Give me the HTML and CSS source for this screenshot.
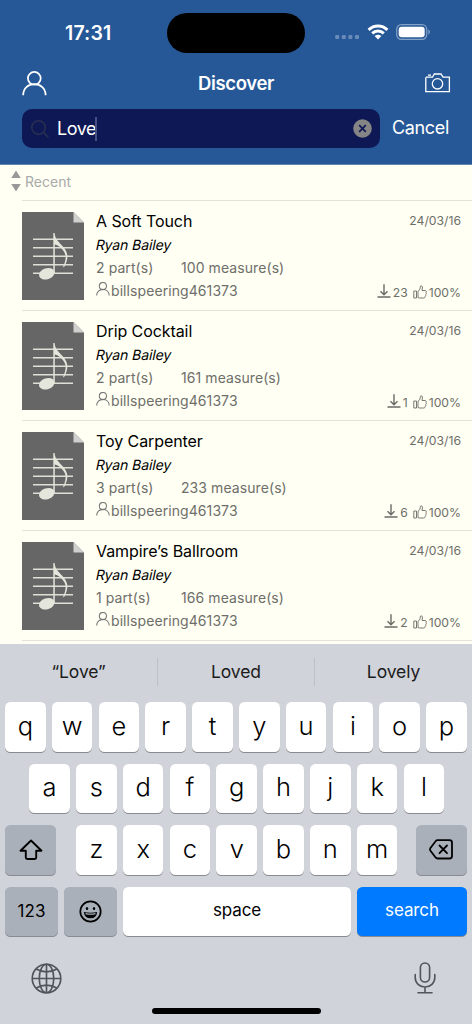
FILE: index.html
```html
<!DOCTYPE html>
<html lang="en">
<head>
<meta charset="utf-8">
<meta name="viewport" content="width=device-width, initial-scale=1">
<title>Discover</title>
<link rel="stylesheet" href="styles.css">
</head>
<body>
<svg class="sprite" aria-hidden="true">
  <symbol id="person" viewBox="0 0 25 25"><circle cx="12.3" cy="7.3" r="6.4"/><path d="M1.2 24.2C1.2 17.5 6 13.2 12.3 13.2S23.6 17.5 23.6 24.2"/></symbol>
  <symbol id="sheet" viewBox="0 0 62 88">
    <path fill="#666" d="M0 0H51.5L62 10.500V88H0z"/><path fill="#d0d0ce" d="M51.500 0L62 10.500H51.500z"/>
    <path fill="none" stroke="#dedfd5" stroke-width="1.500" d="M11 27.200H51M11 35.700H51M11 44.200H51M11 52.700H51M11 61.200H51"/>
    <ellipse cx="24.800" cy="61.700" rx="8" ry="5.500" transform="rotate(-18 24.8 61.700)" fill="#e4e5db"/>
    <path fill="#e4e5db" d="M31.300 21H32.600C33.200 27.500 36.500 29.500 40.500 34C45.500 39.500 47.500 45 42.500 54.500L40.800 55.500C44.500 47.500 44.500 43 41.500 39C39 35.500 36 33.300 32.800 32.500V61H31.300z"/>
  </symbol>
  <symbol id="download" viewBox="0 0 14 14"><path d="M7 .2V10.500M3.500 7.200L7 10.700 10.500 7.200M.5 13H13.500"/></symbol>
  <symbol id="thumb" viewBox="0 0 14 14"><path d="M.8 6H3.500V13H.8zM5 6.300C7 5 7.200 3.500 7.400 1.200C8.900.3 9.600 1.500 9.400 3L9 5.500H12C13.500 5.600 13.600 7 13 7.700C13.500 8.500 13.200 9.300 12.700 9.700C13 10.500 12.600 11 12.200 11.400C12.300 12.400 11.500 13 10.700 13H6.500L5 12.500z"/></symbol>
</svg>
<main class="screen">
  <header class="header">
    <div class="status">
      <span class="time">17:31</span>
      <span class="island"></span>
      <span class="signals">
        <svg class="cell" viewBox="0 0 25 5"><rect x=".2" width="4" height="4" rx="1"/><rect x="6.800" width="4" height="4" rx="1"/><rect x="13.400" width="4" height="4" rx="1"/><rect x="20" width="4" height="4" rx="1"/></svg>
        <svg class="wifi" viewBox="0 0 22 16"><path d="M1.600 5.900C7 .8 15 .8 20.400 5.900M5.200 9.400C8.500 6.300 13.500 6.300 16.800 9.400"/><path class="wifi-tip" d="M7.600 12.100Q11 9.400 14.400 12.100L11 15.600z"/></svg>
        <svg class="battery" viewBox="0 0 35 16"><rect class="shell" x=".7" y=".7" width="30" height="14.600" rx="4.600"/><rect x="2.700" y="2.700" width="26" height="10.600" rx="3"/><path class="cap" d="M32.400 5.300Q35.600 8 32.400 10.700z"/></svg>
      </span>
    </div>
    <div class="nav">
      <svg class="profile"><use href="#person"/></svg>
      <h1 class="title">Discover</h1>
      <svg class="camera" viewBox="0 0 25 20"><path d="M1 4.200H7.500L9.300 1H16L18 4.200H24.400V18.700H.8V4.200M3 2.200H6"/><circle cx="12.500" cy="10.800" r="5.200"/></svg>
    </div>
    <div class="search-row">
      <div class="search-box">
        <svg class="lens" viewBox="0 0 18 18"><circle cx="7.500" cy="7.500" r="6.700"/><path d="M12.300 12.300L17.300 17.300"/></svg>
        <span class="query">Love</span><span class="caret"></span>
        <svg class="clear" viewBox="0 0 19 19"><circle cx="9.500" cy="9.500" r="9.300"/><path d="M6.200 6.200L12.800 12.800M12.800 6.200L6.200 12.800"/></svg>
      </div>
      <span class="cancel">Cancel</span>
    </div>
  </header>

  <section class="results">
    <div class="sort"><svg class="sorter" viewBox="0 0 10 22"><path d="M5 .5L9.800 8H.2zM5 21.500L9.800 14H.2z"/></svg><span>Recent</span></div>
    <article class="song">
      <svg class="thumb-sheet"><use href="#sheet"/></svg>
      <div class="details"><h2>A Soft Touch</h2><p class="artist">Ryan Bailey</p><p class="meta"><span class="parts">2 part(s)</span><span>100 measure(s)</span></p><p class="user"><svg><use href="#person"/></svg>billspeering461373</p></div>
      <div class="side"><time>24/03/16</time><p class="stats"><svg class="dl"><use href="#download"/></svg><span>23</span><svg class="like"><use href="#thumb"/></svg><span>100%</span></p></div>
    </article>
    <article class="song">
      <svg class="thumb-sheet"><use href="#sheet"/></svg>
      <div class="details"><h2>Drip Cocktail</h2><p class="artist">Ryan Bailey</p><p class="meta"><span class="parts">2 part(s)</span><span>161 measure(s)</span></p><p class="user"><svg><use href="#person"/></svg>billspeering461373</p></div>
      <div class="side"><time>24/03/16</time><p class="stats"><svg class="dl"><use href="#download"/></svg><span>1</span><svg class="like"><use href="#thumb"/></svg><span>100%</span></p></div>
    </article>
    <article class="song">
      <svg class="thumb-sheet"><use href="#sheet"/></svg>
      <div class="details"><h2>Toy Carpenter</h2><p class="artist">Ryan Bailey</p><p class="meta"><span class="parts">3 part(s)</span><span>233 measure(s)</span></p><p class="user"><svg><use href="#person"/></svg>billspeering461373</p></div>
      <div class="side"><time>24/03/16</time><p class="stats"><svg class="dl"><use href="#download"/></svg><span>6</span><svg class="like"><use href="#thumb"/></svg><span>100%</span></p></div>
    </article>
    <article class="song">
      <svg class="thumb-sheet"><use href="#sheet"/></svg>
      <div class="details"><h2>Vampire’s Ballroom</h2><p class="artist">Ryan Bailey</p><p class="meta"><span class="parts">1 part(s)</span><span>166 measure(s)</span></p><p class="user"><svg><use href="#person"/></svg>billspeering461373</p></div>
      <div class="side"><time>24/03/16</time><p class="stats"><svg class="dl"><use href="#download"/></svg><span>2</span><svg class="like"><use href="#thumb"/></svg><span>100%</span></p></div>
    </article>
  </section>

  <section class="keyboard">
    <div class="suggestions"><span>“Love”</span><span>Loved</span><span>Lovely</span></div>
    <div class="keys">
      <div class="row"><b>q</b><b>w</b><b>e</b><b>r</b><b>t</b><b>y</b><b>u</b><b>i</b><b>o</b><b>p</b></div>
      <div class="row home"><b>a</b><b>s</b><b>d</b><b>f</b><b>g</b><b>h</b><b>j</b><b>k</b><b>l</b></div>
      <div class="row lower">
        <span class="key gray"><svg class="shift" viewBox="0 0 24 22"><path d="M12 1.500L22.500 11.700H17.200V18.500Q17.200 20 15.700 20H8.300Q6.800 20 6.800 18.500V11.700H1.500z"/></svg></span>
        <div class="row letters"><b>z</b><b>x</b><b>c</b><b>v</b><b>b</b><b>n</b><b>m</b></div>
        <span class="key gray"><svg class="delete" viewBox="0 0 24 21"><path d="M8.500 1.200H20.500Q23 1.200 23 3.700V17Q23 19.500 20.500 19.500H8.500Q7.500 19.500 6.800 18.700L1.300 11.500Q.6 10.400 1.300 9.200L6.800 2Q7.500 1.200 8.500 1.200zM10.500 6.500L18 14.200M18 6.500L10.500 14.200"/></svg></span>
      </div>
      <div class="row actions">
        <span class="key gray num">123</span>
        <span class="key gray"><svg class="smile" viewBox="0 0 23 23"><circle class="face" cx="11.500" cy="11.500" r="10.200"/><ellipse cx="8" cy="8.500" rx="1.200" ry="1.500"/><ellipse cx="15" cy="8.500" rx="1.200" ry="1.500"/><path d="M4.800 12Q11.500 13.300 18.200 12Q17.500 18.300 11.500 18.300T4.800 12z"/><path class="teeth" d="M6.500 13.600Q11.500 14.700 16.500 13.600"/></svg></span>
        <span class="key space">space</span>
        <span class="key go">search</span>
      </div>
    </div>
    <div class="dock">
      <svg class="globe" viewBox="0 0 30 30"><circle cx="15" cy="15" r="13.800"/><ellipse cx="15" cy="15" rx="7" ry="13.800"/><path d="M15 1.200V28.800M1.200 15H28.800M5 5.800Q15 11.500 25 5.800M5 24.200Q15 18.500 25 24.200"/></svg>
      <svg class="mic" viewBox="0 0 22 32"><rect x="6.400" y="1" width="9.200" height="19" rx="4.600"/><path d="M1.200 12.500V15.500C1.200 21 5.500 25 11 25S20.800 21 20.800 15.500V12.500M11 25V30.500M4 30.700H18"/></svg>
    </div>
    <div class="home-bar"></div>
  </section>
</main>
</body>
</html>
```
FILE: styles.css
```css
* { box-sizing: border-box; }
body, h1, h2, p { margin: 0; }
body { font-family: Inter, "Liberation Sans", sans-serif; background: #fffff3; color: #000; }
svg { flex: none; overflow: visible; display: block; }
.sprite { position: absolute; width: 0; height: 0; }
.screen { width: 472px; height: 1024px; display: flex; flex-direction: column; overflow: hidden; }

.header { height: 165px; background: #265897; color: #fff; border-bottom: 1px solid #6386b0; flex: none; }
.status { height: 64px; padding-top: 13px; display: grid; grid-template-columns: 167px 138px 167px; }
.time { height: 40px; line-height: 40px; padding-left: 65px; font-size: 19.500px; font-weight: 600; letter-spacing: .15px; }
.island { height: 40px; border-radius: 20px; background: #000; }
.signals { height: 40px; display: flex; align-items: flex-start; padding: 11px 0 0 30px; fill: #fff; }
.cell { width: 25px; height: 5px; margin-top: 11px; fill: #688bb9; }
.wifi { width: 22px; height: 16px; margin-left: 7px; fill: none; stroke: #fff; stroke-width: 3; }
.wifi-tip { fill: #fff; stroke: none; }
.battery { width: 35px; height: 16px; margin-left: 7px; }
.shell { fill: none; stroke: #84a1c6; stroke-width: 1.200; }
.cap { fill: #84a1c6; }
.nav { height: 45px; display: flex; justify-content: space-between; padding: 7px 22px 0; }
.profile { width: 25px; height: 25px; fill: none; stroke: #fff; stroke-width: 1.700; }
.title { font-size: 18.500px; font-weight: 600; line-height: 25px; letter-spacing: -.35px; }
.camera { width: 25px; height: 20px; margin-top: 2px; fill: none; stroke: #fff; stroke-width: 1.300; }
.search-row { display: flex; align-items: center; height: 39px; }
.search-box { width: 358px; height: 39px; margin-left: 22px; border-radius: 10px; background: #0e1854; display: flex; align-items: center; padding: 0 8px 0 9px; }
.lens { width: 18px; height: 18px; fill: none; stroke: #293052; stroke-width: 1.600; }
.query { margin-left: 8px; font-size: 18px; letter-spacing: -.450px; }
.caret { width: 2px; height: 24px; margin-left: -1px; background: #465082; }
.clear { width: 19px; height: 19px; margin-left: auto; fill: #858585; stroke: #0e1854; stroke-width: 1.700; }
.clear circle { stroke: none; }
.cancel { margin-left: 12px; padding-bottom: 2px; font-size: 18px; letter-spacing: -.35px; }

.results { height: 479px; flex: none; padding-left: 22px; overflow: hidden; }
.sort { height: 35px; margin-left: -11px; display: flex; align-items: center; gap: 4px; font-size: 14px; color: #aaa; padding-bottom: 3px; }
.sorter { width: 10px; height: 22px; fill: #999; }
.song { height: 110px; border-top: 1px solid #e3e3da; display: flex; padding-top: 10px; }
.song:last-child { border-bottom: 1px solid #e3e3da; height: 111px; }
.thumb-sheet { width: 62px; height: 88px; margin-top: 1px; }
.details { margin-left: 12px; color: #6e6e6a; font-size: 14px; line-height: 20px; letter-spacing: .08px; white-space: nowrap; }
.details h2 { font-size: 16px; font-weight: 400; line-height: 20px; letter-spacing: -.08px; color: #000; }
.artist { font-size: 14px; line-height: 20px; letter-spacing: -.1px; margin-top: 4px; color: #000; transform: skewX(-12deg); }
.meta { margin-top: 3px; display: flex; }
.parts { width: 85px; }
.user { margin-top: 3px; display: flex; }
.user svg { width: 14px; height: 14px; margin: 1px 1px 0 0; fill: none; stroke: #777; stroke-width: 1.900; }
.side { flex: 1; padding-right: 11px; display: flex; flex-direction: column; align-items: flex-end; font-size: 12.200px; line-height: 20px; color: #6e6e6a; }
.stats { display: flex; margin-top: 52px; }
.stats svg { width: 14px; height: 14px; margin-top: 1px; fill: none; stroke: #6b6b67; stroke-width: 1.200; }
.stats .dl { margin-right: 2px; stroke-width: 1.400; }
.stats .like { margin: 2px 2px 0 5px; stroke-width: .9; }

.keyboard { height: 380px; background: #d0d3d9; }
.suggestions { height: 58px; padding-top: 14px; display: grid; grid-template-columns: 157px 157px 158px; font-size: 17.500px; line-height: 28px; text-align: center; color: #1b1b1d; letter-spacing: -.1px; }
.suggestions span { height: 28px; }
.suggestions span + span { border-left: 1px solid #bdc0c6; }
.keys { display: grid; gap: 12px; padding: 0 5px; }
.row { display: flex; gap: 6.200px; height: 49.500px; }
.home, .letters { justify-content: center; padding-left: 1.500px; }
.row b, .key { height: 49.500px; border-radius: 5.500px; background: #fff; box-shadow: 0 1px 0 #898b90; display: flex; align-items: center; justify-content: center; }
.row b { width: 40.620px; font-size: 25.500px; font-weight: 300; padding-bottom: 3px; }
.lower { justify-content: space-between; gap: 0; }
.lower .gray { width: 51.300px; }
.row .gray { background: #aab0ba; }
.shift { width: 24px; height: 22px; fill: none; stroke: #000; stroke-width: 1.900; stroke-linejoin: round; }
.delete { width: 24px; height: 21px; fill: none; stroke: #000; stroke-width: 1.800; stroke-linecap: round; }
.actions { font-size: 17px; display: grid; grid-template-columns: 53px 53px 228px 110px; justify-content: space-between; gap: 0; }
.space, .go { padding-bottom: 2px; letter-spacing: -.1px; }
.row .go { background: #007aff; color: #fff; }
.smile { width: 23px; height: 23px; }
.face { fill: none; stroke: #000; stroke-width: 1.700; }
.teeth { fill: none; stroke: #aab0ba; stroke-width: 1.300; }
.dock { height: 69px; padding: 26px 36px 0 31px; display: flex; justify-content: space-between; fill: none; stroke: #50545b; stroke-width: 1.600; }
.globe { width: 31px; height: 31px; margin-top: 1px; }
.mic { width: 22px; height: 32px; stroke-linecap: round; }
.home-bar { width: 169px; height: 6px; margin: 3px auto 0; border-radius: 3px; background: #000; }
```
